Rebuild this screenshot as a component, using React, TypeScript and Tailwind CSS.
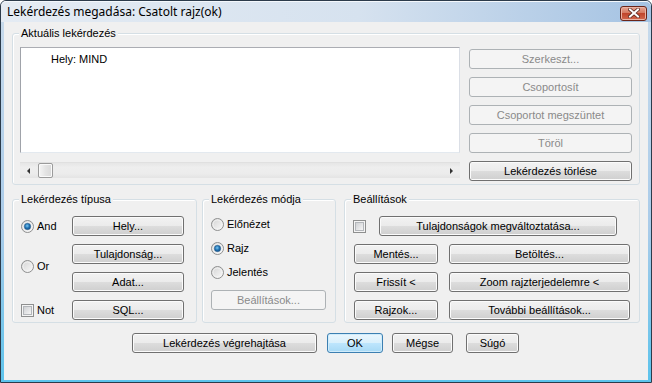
import React from "react";
import clsx from "clsx";

// --- Small Win7 style controls ---
const btnBase = "flex items-center justify-center h-[20px] rounded-[3px] border text-[11px] leading-none";

const Btn: React.FC<{ children: React.ReactNode; className?: string; disabled?: boolean; def?: boolean }> = ({
    children,
    className,
    disabled,
    def,
}) => (
    <div
        className={clsx(
            btnBase,
            disabled
                ? "border-[#adb2b5] bg-[#f4f4f4] text-[#8a8a8a]"
                : def
                    ? "border-[#3c7fb1] bg-[linear-gradient(#eaf6fd_0%,#d9f0fc_50%,#bee6fd_50%,#a7d9f5_100%)] text-black shadow-[inset_0_0_0_1px_#d0ecfb]"
                    : "border-[#707070] bg-[linear-gradient(#f2f2f2_0%,#ebebeb_50%,#dddddd_50%,#cfcfcf_100%)] text-black shadow-[inset_0_0_0_1px_#fbfbfb]",
            className
        )}
    >
        {children}
    </div>
);

const Radio: React.FC<{ checked?: boolean }> = ({ checked }) => (
    <svg width="13" height="13" viewBox="0 0 13 13" className="shrink-0">
        <defs>
            <linearGradient id="rbg" x1="0" y1="0" x2="1" y2="1">
                <stop offset="0" stopColor="#d2d2d2" />
                <stop offset="1" stopColor="#fbfbfb" />
            </linearGradient>
            <radialGradient id="rdot" cx="0.45" cy="0.4" r="0.65">
                <stop offset="0" stopColor="#7cc8f2" />
                <stop offset="0.55" stopColor="#1d6fb0" />
                <stop offset="1" stopColor="#134a7e" />
            </radialGradient>
        </defs>
        <circle cx="6.5" cy="6.5" r="6" fill="url(#rbg)" stroke="#8e8f8f" />
        <circle cx="6.5" cy="6.5" r="4.5" fill="none" stroke="#f4f4f4" strokeWidth="0.8" />
        {checked && <circle cx="6.5" cy="6.5" r="3.2" fill="url(#rdot)" stroke="#2b5f8f" strokeWidth="0.5" />}
    </svg>
);

const Check: React.FC<{ className?: string }> = ({ className }) => (
    <div className={clsx("w-[13px] h-[13px] shrink-0 border border-[#8e8f8f] bg-[#f4f4f4] p-[1px]", className)}>
        <div className="w-full h-full border border-[#b3b6ba] bg-[linear-gradient(135deg,#cfd1d4,#f5f5f5)]" />
    </div>
);

const Group: React.FC<{ label: string; className?: string; children: React.ReactNode }> = ({ label, className, children }) => (
    <div className={clsx("relative rounded-[3px] border border-[#d5dfe5] shadow-[inset_1px_1px_0_#ffffff]", className)}>
        <span className="absolute -top-[8px] left-[6px] px-[2px] bg-[#f0f0f0] text-[11px] leading-[14px]">{label}</span>
        {children}
    </div>
);

const RadioRow: React.FC<{ label: string; checked?: boolean }> = ({ label, checked }) => (
    <div className="flex items-center gap-[3px] h-[13px] text-[11px] leading-none">
        <Radio checked={checked} />
        <span>{label}</span>
    </div>
);

const App: React.FC = () => {
    return (
        <div
            className="w-[652px] h-[383px] flex flex-col border border-[#2c3b4b] rounded-t-[6px] bg-[linear-gradient(#c9dbec,#a9cbe9_60%,#5cc3ec)] text-black overflow-hidden"
            style={{ fontFamily: '"Liberation Sans", Arial, sans-serif' }}
        >
            {/* Title bar */}
            <div className="h-[21px] shrink-0 flex items-center justify-between rounded-t-[5px] bg-[linear-gradient(90deg,#e4ebf3,#d6e2ef_55%,#a5c3e3)] shadow-[inset_0_1px_0_#f4f8fc]">
                <span className="pl-[6px] pt-[1px] text-[12px] text-black" style={{ fontFamily: '"Noto Sans", "Open Sans", sans-serif' }}>
                    Lekérdezés megadása: Csatolt rajz(ok)
                </span>
                <div className="mr-[4px] mt-[3px] w-[27px] h-[15px] rounded-[3px] border border-[#6b2519] bg-[linear-gradient(#e8a593,#d47a62_45%,#c0452c_50%,#d2684d)] shadow-[inset_0_0_0_1px_#eab3a4] flex items-center justify-center">
                    <svg width="12" height="10" viewBox="0 0 12 10">
                        <path d="M2 1.5 L10 8.5 M10 1.5 L2 8.5" stroke="#5a2a22" strokeWidth="3.6" strokeLinecap="square" />
                        <path d="M2 1.5 L10 8.5 M10 1.5 L2 8.5" stroke="#ffffff" strokeWidth="2" strokeLinecap="square" />
                    </svg>
                </div>
            </div>

            {/* Client area */}
            <div className="mx-[3px] h-[358px] shrink-0 bg-[#f0f0f0] px-[8px] pt-[11px]">
                <Group label="Aktuális lekérdezés" className="h-[152px] flex pl-[7px] pt-[13px]">
                    <div className="flex flex-col">
                        <div className="w-[440px] h-[106px] bg-white border border-[#abadb3] border-l-[#a0a3aa] border-r-[#dbdfe6] border-b-[#e3e9ef] pl-[30px] pt-[5px] text-[11px] leading-[13px]">
                            Hely: MIND
                        </div>
                        {/* scrollbar */}
                        <div className="mt-[9px] w-[440px] h-[16px] flex items-center bg-[linear-gradient(#e6e6e6,#eeeeee_30%,#ececec_70%,#e4e4e4)] border-t border-[#e0e0e0]">
                            <div className="w-[17px] h-full flex items-center justify-center">
                                <div className="w-0 h-0 border-y-[3px] border-y-transparent border-r-[3px] border-r-[#333]" />
                            </div>
                            <div className="ml-[1px] w-[15px] h-[15px] rounded-[2px] border border-[#9b9b9b] bg-[linear-gradient(90deg,#f6f6f6,#e4e4e4_50%,#d9d9d9)] shadow-[inset_0_0_0_1px_#fafafa]" />
                            <div className="flex-1" />
                            <div className="w-[17px] h-full flex items-center justify-center">
                                <div className="w-0 h-0 border-y-[3px] border-y-transparent border-l-[3px] border-l-[#333]" />
                            </div>
                        </div>
                    </div>
                    <div className="ml-[9px] mt-[2px] flex flex-col gap-[8px] w-[163px]">
                        <Btn disabled>Szerkeszt...</Btn>
                        <Btn disabled>Csoportosít</Btn>
                        <Btn disabled>Csoportot megszüntet</Btn>
                        <Btn disabled>Töröl</Btn>
                        <Btn>Lekérdezés törlése</Btn>
                    </div>
                </Group>

                <div className="mt-[14px] flex h-[124px]">
                    <Group label="Lekérdezés típusa" className="w-[185px] pl-[8px] pt-[16px]">
                        <div className="grid grid-cols-[51px_112px] grid-rows-[20px_20px_20px_20px] gap-y-[8px]">
                            <div className="flex items-center">
                                <RadioRow label="And" checked />
                            </div>
                            <Btn>Hely...</Btn>
                            <div className="row-span-2 flex items-center pb-[3px]">
                                <RadioRow label="Or" />
                            </div>
                            <Btn>Tulajdonság...</Btn>
                            <Btn className="col-start-2">Adat...</Btn>
                            <div className="flex items-center gap-[3px] text-[11px] leading-none">
                                <Check />
                                <span>Not</span>
                            </div>
                            <Btn>SQL...</Btn>
                        </div>
                    </Group>

                    <Group label="Lekérdezés módja" className="ml-[5px] w-[134px] pl-[8px] pt-[18px]">
                        <div className="flex flex-col gap-[11px]">
                            <RadioRow label="Előnézet" />
                            <RadioRow label="Rajz" checked />
                            <RadioRow label="Jelentés" />
                        </div>
                        <Btn disabled className="mt-[11px] w-[115px]">
                            Beállítások...
                        </Btn>
                    </Group>

                    <Group label="Beállítások" className="ml-[8px] w-[296px] pl-[9px] pt-[16px]">
                        <div className="flex flex-col gap-[8px]">
                            <div className="flex items-center">
                                <Check className="-ml-[1px]" />
                                <Btn className="ml-[13px] w-[238px]">Tulajdonságok megváltoztatása...</Btn>
                            </div>
                            <div className="flex gap-[11px]">
                                <Btn className="w-[84px]">Mentés...</Btn>
                                <Btn className="w-[181px]">Betöltés...</Btn>
                            </div>
                            <div className="flex gap-[11px]">
                                <Btn className="w-[84px]">Frissít &lt;</Btn>
                                <Btn className="w-[181px]">Zoom rajzterjedelemre &lt;</Btn>
                            </div>
                            <div className="flex gap-[11px]">
                                <Btn className="w-[84px]">Rajzok...</Btn>
                                <Btn className="w-[181px]">További beállítások...</Btn>
                            </div>
                        </div>
                    </Group>
                </div>

                {/* Dialog buttons */}
                <div className="mt-[10px] flex pl-[120px]">
                    <Btn className="w-[185px]">Lekérdezés végrehajtása</Btn>
                    <Btn def className="ml-[10px] w-[56px]">OK</Btn>
                    <Btn className="ml-[9px] w-[61px]">Mégse</Btn>
                    <Btn className="ml-[13px] w-[53px]">Súgó</Btn>
                </div>
            </div>
        </div>
    );
};

export default App;
